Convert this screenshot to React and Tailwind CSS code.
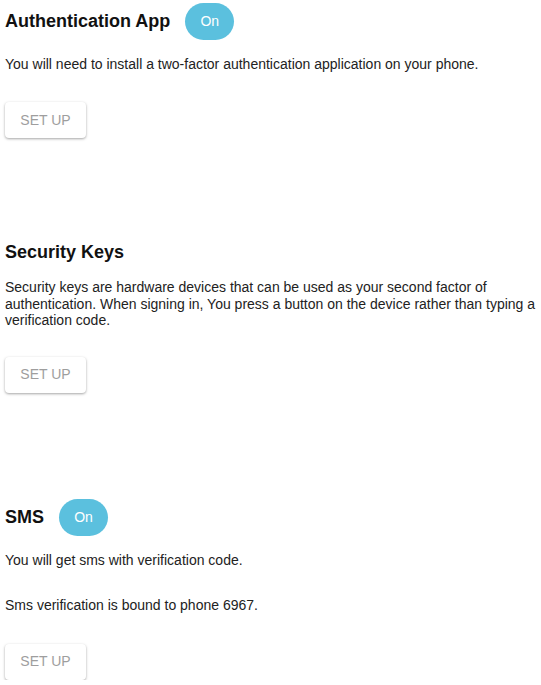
const SetUp = () => (
  <button className="h-9 w-[81px] rounded bg-white text-[14px] uppercase text-[#9e9e9e] shadow-[0_1px_3px_rgba(0,0,0,0.25),0_1px_2px_rgba(0,0,0,0.12)]">
    Set up
  </button>
);

const Pill = () => (
  <span className="flex h-[37px] w-[49px] items-center justify-center rounded-full bg-[#5bc0de] text-[14px] text-white">
    On
  </span>
);

export default function App() {
  return (
    <div className="px-[5px] pt-[3px] font-['Liberation_Sans',Arial,sans-serif] text-[#222]">
      <section>
        <div className="flex items-center gap-[15px]">
          <h3 className="text-[18px] font-bold text-[#111]">Authentication App</h3>
          <Pill />
        </div>
        <p className="mt-4 text-[14px] leading-4">
          You will need to install a two-factor authentication application on your phone.
        </p>
        <div className="mt-[30px]">
          <SetUp />
        </div>
      </section>

      <section className="mt-[104px]">
        <h3 className="text-[18px] font-bold leading-[21px] text-[#111]">Security Keys</h3>
        <p className="mt-4 text-[14px] leading-[16.5px]">
          Security keys are hardware devices that can be used as your second factor of
          authentication. When signing in, You press a button on the device rather than typing a
          verification code.
        </p>
        <div className="mt-[28px]">
          <SetUp />
        </div>
      </section>

      <section className="mt-[106px]">
        <div className="flex items-center gap-[15px]">
          <h3 className="text-[18px] font-bold text-[#111]">SMS</h3>
          <Pill />
        </div>
        <p className="mt-4 text-[14px] leading-4">You will get sms with verification code.</p>
        <p className="mt-[29px] text-[14px] leading-4">Sms verification is bound to phone 6967.</p>
        <div className="mt-[31px]">
          <SetUp />
        </div>
      </section>
    </div>
  );
}
